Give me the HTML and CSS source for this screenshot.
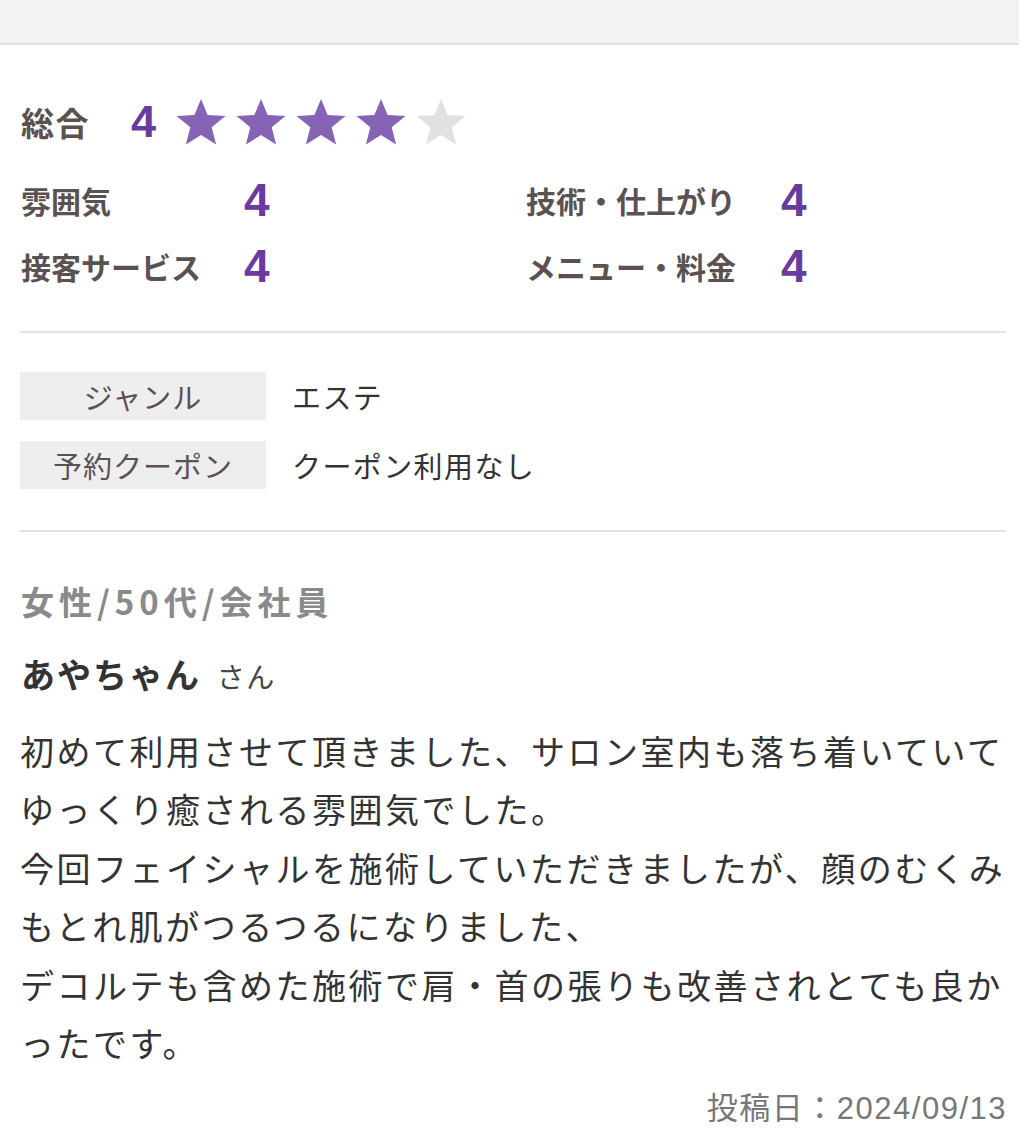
FILE: index.html
```html
<!DOCTYPE html>
<html lang="ja">
<head>
<meta charset="utf-8">
<title>口コミ</title>
<link rel="stylesheet" href="styles.css">
</head>
<body>
<div class="topbar"></div>
<main class="review">
  <section class="ratings">
    <div class="total">
      <span class="total-label">総合</span>
      <span class="total-value">4</span>
      <span class="stars">
        <svg class="star on" viewBox="0 0 52 48"><polygon points="26,1 32.6,16.9 50.5,18 36.7,29.3 41.1,46.5 26,37 10.9,46.5 15.3,29.3 1.5,18 19.4,16.9"/></svg>
        <svg class="star on" viewBox="0 0 52 48"><polygon points="26,1 32.6,16.9 50.5,18 36.7,29.3 41.1,46.5 26,37 10.9,46.5 15.3,29.3 1.5,18 19.4,16.9"/></svg>
        <svg class="star on" viewBox="0 0 52 48"><polygon points="26,1 32.6,16.9 50.5,18 36.7,29.3 41.1,46.5 26,37 10.9,46.5 15.3,29.3 1.5,18 19.4,16.9"/></svg>
        <svg class="star on" viewBox="0 0 52 48"><polygon points="26,1 32.6,16.9 50.5,18 36.7,29.3 41.1,46.5 26,37 10.9,46.5 15.3,29.3 1.5,18 19.4,16.9"/></svg>
        <svg class="star off" viewBox="0 0 52 48"><polygon points="26,1 32.6,16.9 50.5,18 36.7,29.3 41.1,46.5 26,37 10.9,46.5 15.3,29.3 1.5,18 19.4,16.9"/></svg>
      </span>
    </div>
    <div class="sub-grid">
      <div class="sub left"><span class="sub-label">雰囲気</span><span class="sub-value">4</span></div>
      <div class="sub right"><span class="sub-label">技術・仕上がり</span><span class="sub-value">4</span></div>
      <div class="sub left"><span class="sub-label">接客サービス</span><span class="sub-value">4</span></div>
      <div class="sub right"><span class="sub-label">メニュー・料金</span><span class="sub-value">4</span></div>
    </div>
  </section>
  <hr class="divider">
  <section class="info">
    <div class="info-row"><span class="info-label">ジャンル</span><span class="info-value">エステ</span></div>
    <div class="info-row"><span class="info-label">予約クーポン</span><span class="info-value">クーポン利用なし</span></div>
  </section>
  <hr class="divider divider-2">
  <section class="post">
    <p class="profile">女性/50代/会社員</p>
    <p class="name">あやちゃん <span class="san">さん</span></p>
    <p class="body">初めて利用させて頂きました、サロン室内も落ち着いていてゆっくり癒される雰囲気でした。<br>今回フェイシャルを施術していただきましたが、顔のむくみもとれ肌がつるつるになりました、<br>デコルテも含めた施術で肩・首の張りも改善されとても良かったです。</p>
    <p class="date">投稿日：2024/09/13</p>
  </section>
</main>
</body>
</html>
```

FILE: styles.css
```css
html, body {
  margin: 0;
  padding: 0;
  background: #ffffff;
}

body {
  font-family: "Liberation Sans", "Noto Sans CJK JP", sans-serif;
  color: #333333;
  width: 1019px;
}

.topbar {
  height: 43px;
  background: #f3f2f0;
  border-bottom: 2px solid #e2e2e2;
}

.review {
  padding: 0 13px 0 20px;
}

.ratings {
  padding-top: 53px;
}

.total {
  display: flex;
  align-items: center;
  height: 48px;
}

.total-label {
  font-family: "Noto Sans CJK JP", sans-serif;
  font-weight: 700;
  font-size: 33px;
  letter-spacing: 1.5px;
  color: #5b5151;
  padding-left: 1px;
  width: 110px;
  line-height: 48px;
}

.total-value {
  font-family: "Liberation Sans", sans-serif;
  font-weight: 700;
  font-size: 45px;
  line-height: 48px;
  color: #6a3a9f;
  width: 44px;
}

.stars {
  display: flex;
  gap: 8px;
  height: 48px;
  align-items: center;
}

.star {
  width: 52px;
  height: 48px;
  display: block;
}

.star.on {
  fill: #8663b4;
}

.star.off {
  fill: #e1e1e3;
}

.sub-grid {
  margin-top: 21px;
  display: grid;
  grid-template-columns: 507px 1fr;
  grid-auto-rows: 66px;
}

.sub {
  display: flex;
  align-items: center;
}

.sub-label {
  font-family: "Noto Sans CJK JP", sans-serif;
  font-weight: 700;
  font-size: 30px;
  color: #5b5151;
  padding-left: 1px;
}

.sub.left .sub-label {
  width: 223px;
}

.sub.right {
  margin-left: -2px;
}

.sub.right .sub-label {
  width: 255px;
}

.sub-value {
  font-family: "Liberation Sans", sans-serif;
  font-weight: 700;
  font-size: 46px;
  line-height: 66px;
  color: #6a3a9f;
}

.divider {
  margin: 32px 0 0 0;
  border: 0;
  height: 2px;
  background: #e2e2e2;
}

.divider-2 {
  margin-top: 41px;
}

.info {
  margin-top: 39px;
  display: flex;
  flex-direction: column;
  gap: 21px;
}

.info-row {
  display: flex;
  align-items: center;
  height: 48px;
}

.info-label {
  width: 246px;
  height: 48px;
  line-height: 48px;
  background: #eeeeee;
  text-align: center;
  font-family: "Noto Sans CJK JP", sans-serif;
  font-size: 29px;
  letter-spacing: 1px;
  color: #5b5151;
}

.info-value {
  margin-left: 26px;
  font-family: "Noto Sans CJK JP", sans-serif;
  font-size: 29px;
  letter-spacing: 1.4px;
  color: #333333;
}

.post p {
  margin: 0;
}

.profile {
  margin-top: 49px !important;
  font-family: "Noto Sans CJK JP", sans-serif;
  font-weight: 700;
  font-size: 33px;
  letter-spacing: 5px;
  line-height: 40px;
  color: #8a8a8a;
  padding-left: 1px;
}

.name {
  margin-top: 31px !important;
  font-family: "Noto Sans CJK JP", sans-serif;
  font-weight: 700;
  font-size: 34px;
  letter-spacing: 2px;
  line-height: 44px;
  color: #333333;
  padding-left: 1px;
}

.san {
  font-weight: 400;
  font-size: 28px;
  letter-spacing: 1.5px;
  color: #444444;
  margin-left: 6px;
}

.body {
  margin: 24px -2px 0 0 !important;
  font-family: "Noto Sans CJK JP", sans-serif;
  font-size: 34px;
  letter-spacing: 2.5px;
  line-height: 58.4px;
  color: #333333;
  line-break: loose;
}

.date {
  margin-top: 17px !important;
  text-align: right;
  font-family: "Liberation Sans", "Noto Sans CJK JP", sans-serif;
  font-size: 31px;
  letter-spacing: 1.5px;
  line-height: 40px;
  color: #777777;
  margin-right: -1px !important;
}
```
